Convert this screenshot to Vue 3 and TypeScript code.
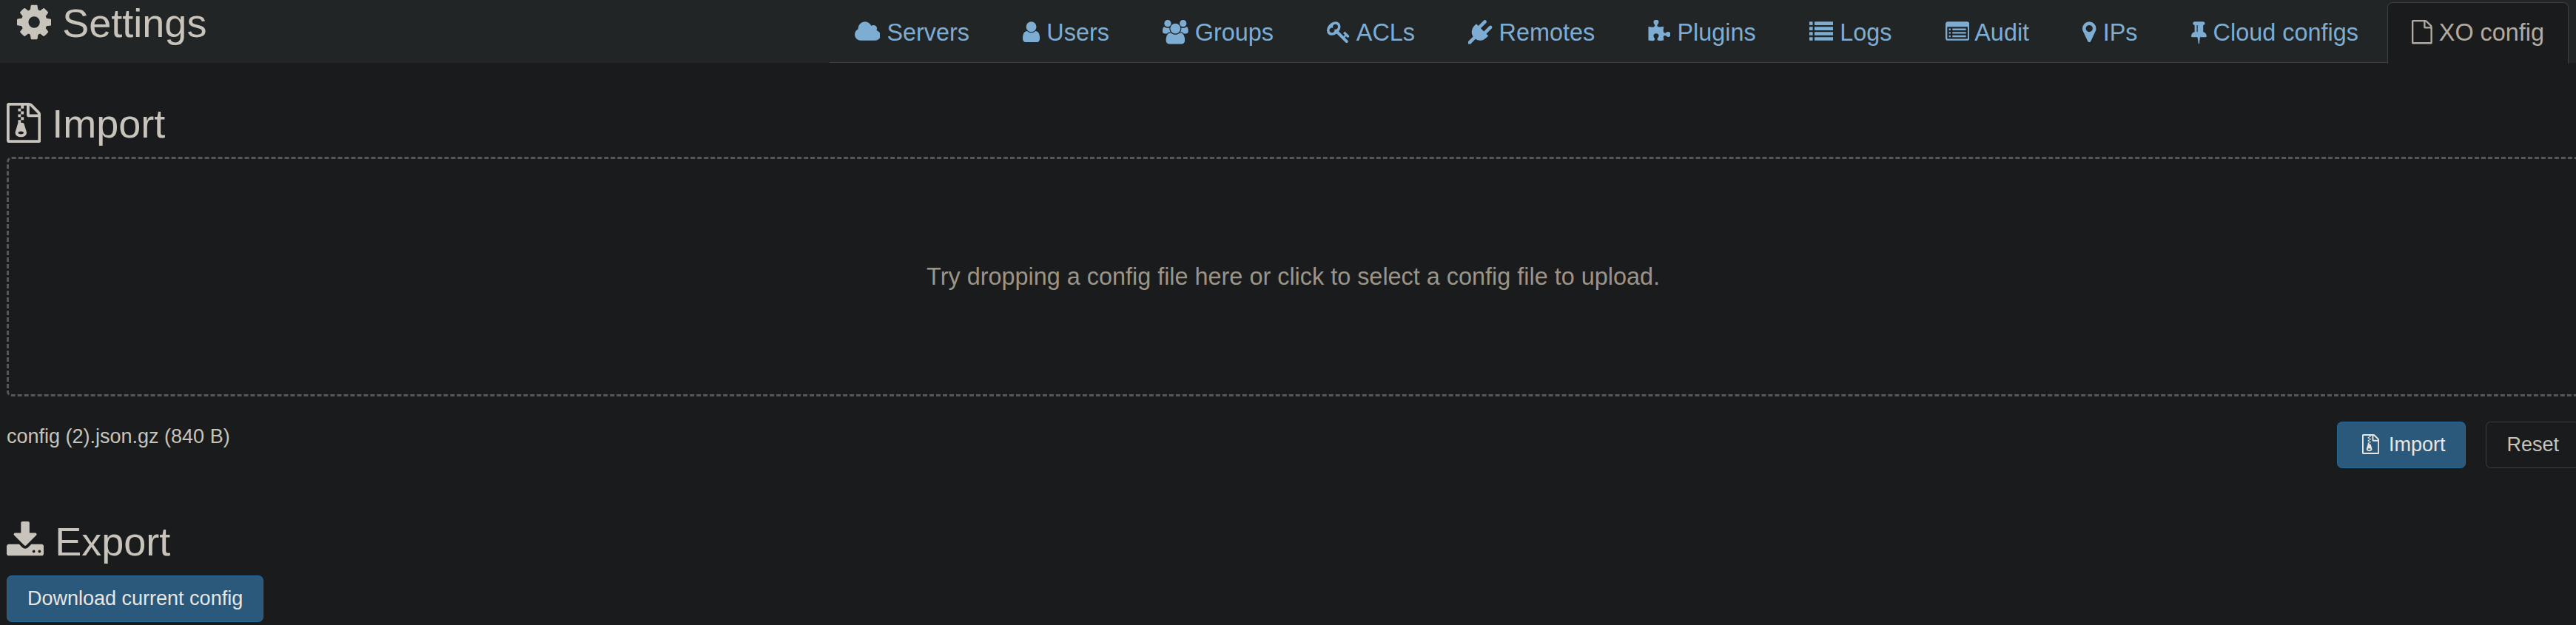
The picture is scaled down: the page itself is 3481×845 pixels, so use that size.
<script setup lang="ts">
import { h, type FunctionalComponent } from 'vue'

interface Glyph {
  x: number
  w: number
  d: string
}

// Glyphs share a 1792-unit em square; x and w describe the horizontal advance box.
const glyphs: Record<string, Glyph> = {
  cog: { x: 128, w: 1536, d: 'M1152 896q0-106-75-181t-181-75-181 75-75 181 75 181 181 75 181-75 75-181zm512-109v222q0 12-8 23t-20 13l-185 28q-19 54-39 91 35 50 107 138 10 12 10 25t-9 23q-27 37-99 108t-94 71q-12 0-26-9l-138-108q-44 23-91 38-16 136-29 186-7 28-36 28h-222q-14 0-24.5-8.5t-11.5-21.5l-28-184q-49-16-90-37l-141 107q-10 9-25 9-14 0-25-11-126-114-165-168-7-10-7-23 0-12 8-23 15-21 51-66.5t54-70.5q-27-50-41-99l-183-27q-13-2-21-12.5t-8-23.5v-222q0-12 8-23t19-13l186-28q14-46 39-92-40-57-107-138-10-12-10-24 0-10 9-23 26-36 98.5-107.5t94.5-71.5q13 0 26 10l138 107q44-23 91-38 16-136 29-186 7-28 36-28h222q14 0 24.5 8.5t11.5 21.5l28 184q49 16 90 37l142-107q9-9 24-9 13 0 25 10 129 119 165 170 7 8 7 22 0 12-8 23-15 21-51 66.5t-54 70.5q26 50 41 98l183 28q13 2 21 12.5t8 23.5z' },
  cloud: { x: -64, w: 1920, d: 'M1856 1152q0 159-112.5 271.5t-271.5 112.5h-1088q-185 0-316.5-131.5t-131.5-316.5q0-132 71-241.5t187-163.5q-2-28-2-43 0-212 150-362t362-150q158 0 286.5 88t187.5 230q70-62 166-62 106 0 181 75t75 181q0 75-41 138 129 30 213 134.5t84 239.5z' },
  user: { x: 256, w: 1280, d: 'M1536 1399q0 109-62.5 187t-150.5 78h-854q-88 0-150.5-78t-62.5-187q0-85 8.5-160.5t31.5-152 58.5-131 94-89 134.5-34.5q131 128 313 128t313-128q76 0 134.5 34.5t94 89 58.5 131 31.5 152 8.5 160.5zm-256-887q0 159-112.5 271.5t-271.5 112.5-271.5-112.5-112.5-271.5 112.5-271.5 271.5-112.5 271.5 112.5 112.5 271.5z' },
  users: { x: 0, w: 1920, d: 'M593 896q-162 5-265 128h-134q-82 0-138-40.5t-56-118.5q0-353 124-353 6 0 43.5 21t97.5 42.5 119 21.5q67 0 133-23-5 37-5 66 0 139 81 256zm1071 637q0 120-73 189.5t-194 69.5h-874q-121 0-194-69.5t-73-189.5q0-53 3.5-103.5t14-109 26.5-108.5 43-97.5 62-81 85.5-53.5 111.5-20q10 0 43 21.5t73 48 107 48 135 21.5 135-21.5 107-48 73-48 43-21.5q61 0 111.5 20t85.5 53.5 62 81 43 97.5 26.5 108.5 14 109 3.5 103.5zm-1024-1277q0 106-75 181t-181 75-181-75-75-181 75-181 181-75 181 75 75 181zm704 384q0 159-112.5 271.5t-271.5 112.5-271.5-112.5-112.5-271.5 112.5-271.5 271.5-112.5 271.5 112.5 112.5 271.5zm576 225q0 78-56 118.5t-138 40.5h-134q-103-123-265-128 81-117 81-256 0-29-5-66 66 23 133 23 59 0 119-21.5t97.5-42.5 43.5-21q124 0 124 353zm-128-609q0 106-75 181t-181 75-181-75-75-181 75-181 181-75 181 75 75 181z' },
  key: { x: 0, w: 1792, d: 'M832 512q0-80-56-136t-136-56-136 56-56 136q0 42 19 83-41-19-83-19-80 0-136 56t-56 136 56 136 136 56 136-56 56-136q0-42-19-83 41 19 83 19 80 0 136-56t56-136zm851 704q0 17-49 66t-66 49q-9 0-28.5-16t-36.5-33-38.5-40-24.5-26l-96 96 220 220q28 28 28 68 0 42-39 81t-81 39q-40 0-68-28l-671-671q-176 131-365 131-163 0-265.5-102.5t-102.5-265.5q0-160 95-313t248-248 313-95q163 0 265.5 102.5t102.5 265.5q0 189-131 365l355 355 96-96q-3-3-26-24.5t-40-38.5-33-36.5-16-28.5q0-17 49-66t66-49q13 0 23 10 6 6 46 44.5t82 79.5 86.5 86 73 78 28.5 41z' },
  plug: { x: 0, w: 1792, d: 'M1755 453q37 38 37 90.5t-37 90.5l-401 400 150 150-160 160q-163 163-389.5 186.5t-411.5-100.5l-362 362h-181v-181l362-362q-124-185-100.5-411.5t186.5-389.5l160-160 150 150 400-401q38-37 91-37t90 37 37 90.5-37 90.5l-400 401 234 234 401-400q38-37 91-37t90 37z' },
  puzzle: { x: 64, w: 1664, d: 'M1755 1083q0 81-44.5 135t-123.5 54q-41 0-77.5-17.5t-59-38-56.5-38-71-17.5q-110 0-110 124 0 39 16 115t15 115v5q-22 0-33 1-34 3-97.5 11.5t-115.5 13.5-98 5q-61 0-103-26.5t-42-83.5q0-37 17.5-71t38-56.5 38-59 17.5-77.5q0-79-54-123.5t-135-44.5q-84 0-143 45.5t-59 127.5q0 43 15 83t33.5 64.5 33.5 53 15 50.5q0 45-46 89-37 35-117 35-95 0-245-24-9-2-27.5-4t-27.5-4l-13-2q-1 0-3-1-2 0-2-1v-1024q2 1 17.5 3.5t34 5 21.5 3.5q150 24 245 24 80 0 117-35 46-44 46-89 0-22-15-50.5t-33.5-53-33.5-64.5-15-83q0-82 59-127.5t144-45.5q80 0 134 44.5t54 123.5q0 41-17.5 77.5t-38 59-38 56.5-17.5 71q0 57 42 83.5t103 26.5q64 0 180-15t163-17v2q-1 2-3.5 17.5t-5 34-3.5 21.5q-24 150-24 245 0 80 35 117 44 46 89 46 22 0 50.5-15t53-33.5 64.5-33.5 83-15q82 0 127.5 59t45.5 143z' },
  list: { x: 0, w: 1792, d: 'M32 128h192q32 0 32 32v192q0 32-32 32h-192q-32 0-32-32v-192q0-32 32-32zM32 512h192q32 0 32 32v192q0 32-32 32h-192q-32 0-32-32v-192q0-32 32-32zM32 896h192q32 0 32 32v192q0 32-32 32h-192q-32 0-32-32v-192q0-32 32-32zM32 1280h192q32 0 32 32v192q0 32-32 32h-192q-32 0-32-32v-192q0-32 32-32zM416 128h1344q32 0 32 32v192q0 32-32 32h-1344q-32 0-32-32v-192q0-32 32-32zM416 512h1344q32 0 32 32v192q0 32-32 32h-1344q-32 0-32-32v-192q0-32 32-32zM416 896h1344q32 0 32 32v192q0 32-32 32h-1344q-32 0-32-32v-192q0-32 32-32zM416 1280h1344q32 0 32 32v192q0 32-32 32h-1344q-32 0-32-32v-192q0-32 32-32z' },
  listAlt: { x: 0, w: 1792, d: 'M160 128h1472q66 0 113 47t47 113v1088q0 66-47 113t-113 47h-1472q-66 0-113-47t-47-113v-1088q0-66 47-113t113-47zM160 512q-32 0-32 32v832q0 32 32 32h1472q32 0 32-32v-832q0-32-32-32zM288 640h64q32 0 32 32v64q0 32-32 32h-64q-32 0-32-32v-64q0-32 32-32zM288 896h64q32 0 32 32v64q0 32-32 32h-64q-32 0-32-32v-64q0-32 32-32zM288 1152h64q32 0 32 32v64q0 32-32 32h-64q-32 0-32-32v-64q0-32 32-32zM544 640h960q32 0 32 32v64q0 32-32 32h-960q-32 0-32-32v-64q0-32 32-32zM544 896h960q32 0 32 32v64q0 32-32 32h-960q-32 0-32-32v-64q0-32 32-32zM544 1152h960q32 0 32 32v64q0 32-32 32h-960q-32 0-32-32v-64q0-32 32-32z' },
  marker: { x: 384, w: 1024, d: 'M1152 640q0-106-75-181t-181-75-181 75-75 181 75 181 181 75 181-75 75-181zm256 0q0 109-33 179l-364 774q-16 33-47.5 52t-67.5 19-67.5-19-46.5-52l-365-774q-33-70-33-179 0-212 150-362t362-150 362 150 150 362z' },
  tack: { x: 320, w: 1152, d: 'M800 864v-448q0-14-9-23t-23-9-23 9-9 23v448q0 14 9 23t23 9 23-9 9-23zm672 352q0 26-19 45t-45 19h-429l-51 483q-2 12-10.5 20.5t-20.5 8.5h-1q-27 0-32-27l-76-485h-404q-26 0-45-19t-19-45q0-123 78.5-221.5t177.5-98.5v-512q-52 0-90-38t-38-90 38-90 90-38h640q52 0 90 38t38 90-38 90-90 38v512q99 0 177.5 98.5t78.5 221.5z' },
  file: { x: 128, w: 1536, d: 'M1596 380q28 28 48 76t20 88v1152q0 40-28 68t-68 28h-1344q-40 0-68-28t-28-68v-1600q0-40 28-68t68-28h896q40 0 88 20t76 48zm-444-244v376h376q-10-29-22-41l-313-313q-12-12-41-22zm384 1528v-1024h-416q-40 0-68-28t-28-68v-416h-768v1536h1280z' },
  archive: { x: 128, w: 1536, d: 'M768 384v-128h-128v128h128zm128 128v-128h-128v128h128zm-128 128v-128h-128v128h128zm128 128v-128h-128v128h128zm700-388q28 28 48 76t20 88v1152q0 40-28 68t-68 28h-1344q-40 0-68-28t-28-68v-1600q0-40 28-68t68-28h896q40 0 88 20t76 48zm-444-244v376h376q-10-29-22-41l-313-313q-12-12-41-22zm384 1528v-1024h-416q-40 0-68-28t-28-68v-416h-128v128h-128v-128h-512v1536h1280zm-627-721l107 349q8 27 8 52 0 83-72.5 137.5t-183.5 54.5-183.5-54.5-72.5-137.5q0-25 8-52 21-63 120-396v-128h128v128h79q22 0 39 13t23 34zm-141 465q53 0 90.5-19t37.5-45-37.5-45-90.5-19-90.5 19-37.5 45 37.5 45 90.5 19z' },
  download: { x: 64, w: 1664, d: 'M1344 1344q0-26-19-45t-45-19-45 19-19 45 19 45 45 19 45-19 19-45zm256 0q0-26-19-45t-45-19-45 19-19 45 19 45 45 19 45-19 19-45zm128-224v320q0 40-28 68t-68 28h-1472q-40 0-68-28t-28-68v-320q0-40 28-68t68-28h465l135 136q58 56 136 56t136-56l136-136h464q40 0 68 28t28 68zm-325-569q17 41-14 70l-448 448q-18 19-45 19t-45-19l-448-448q-31-29-14-70 17-39 59-39h256v-448q0-26 19-45t45-19h256q26 0 45 19t19 45v448h256q42 0 59 39z' },
}

const Icon: FunctionalComponent<{ name: string }> = ({ name }) => {
  const g = glyphs[name]
  return h(
    'svg',
    {
      viewBox: `${g.x} 0 ${g.w} 1792`,
      style: { width: `${g.w / 1792}em` },
      'aria-hidden': 'true',
    },
    [h('path', { d: g.d, fill: 'currentColor', 'fill-rule': 'evenodd' })],
  )
}
Icon.props = ['name']

const tabs = [
  { icon: 'cloud', label: 'Servers' },
  { icon: 'user', label: 'Users' },
  { icon: 'users', label: 'Groups' },
  { icon: 'key', label: 'ACLs' },
  { icon: 'plug', label: 'Remotes' },
  { icon: 'puzzle', label: 'Plugins' },
  { icon: 'list', label: 'Logs' },
  { icon: 'listAlt', label: 'Audit' },
  { icon: 'marker', label: 'IPs' },
  { icon: 'tack', label: 'Cloud configs' },
  { icon: 'file', label: 'XO config' },
]
const activeTab = 'XO config'
</script>

<template>
  <div class="page">
    <header class="header">
      <h2 class="title"><Icon class="icon" name="cog" /> Settings</h2>
      <nav class="tabs">
        <a
          v-for="tab in tabs"
          :key="tab.label"
          class="tab"
          :class="{ active: tab.label === activeTab }"
        ><Icon class="icon" :name="tab.icon" /> {{ tab.label }}</a>
      </nav>
    </header>
    <main class="content">
      <h2 class="import-heading"><Icon class="icon" name="archive" /> Import</h2>
      <div class="dropzone">Try dropping a config file here or click to select a config file to upload.</div>
      <div class="file-row">
        <span class="file-name">config (2).json.gz (840 B)</span>
        <div class="actions">
          <button class="btn primary" type="button"><Icon class="icon wide" name="archive" /> Import</button>
          <button class="btn" type="button">Reset</button>
        </div>
      </div>
      <h2 class="export-heading"><Icon class="icon" name="download" /> Export</h2>
      <button class="btn primary" type="button">Download current config</button>
    </main>
  </div>
</template>

<style>
html {
  font-size: 27px;
}
body {
  margin: 0;
  overflow: hidden;
  background: #1a1b1c;
}
</style>

<style scoped>
.page {
  width: 3481px;
  height: 845px;
  overflow: hidden;
  background: #1a1b1c;
  color: #c8c3bb;
  font: 1rem/1.5 "Liberation Sans", Arial, sans-serif;
}
.icon {
  display: inline-block;
  height: 1em;
  vertical-align: -0.142857em;
}
.icon.wide {
  margin: 0 0.2143em;
}
h2 {
  margin: 0;
  font-size: 2rem;
  font-weight: 400;
  line-height: 1.1;
  height: 1.1em;
  white-space: pre;
}
.header {
  display: flex;
  justify-content: space-between;
  align-items: flex-end;
  box-sizing: border-box;
  height: 85px;
  padding-right: 9.6px;
  background: #222526;
}
.title {
  align-self: flex-start;
  padding: 1.6px 0 0 23px;
}
.tabs {
  display: flex;
  gap: 5.4px;
  box-sizing: border-box;
  height: 82px;
  border-bottom: 1px solid #3b4042;
  font-size: 1.2rem;
}
.tab {
  box-sizing: border-box;
  height: 83px;
  padding: 15.9px 1em 0;
  border: 1px solid transparent;
  border-radius: 7px 7px 0 0;
  color: #7eadd4;
  white-space: pre;
}
.tab.active {
  border-color: #3b4042;
  border-bottom: 0;
  background: #1a1b1c;
  color: #b2aba0;
}
.content {
  padding-left: 9px;
}
.import-heading {
  margin-top: 52.6px;
}
.dropzone {
  display: flex;
  align-items: center;
  justify-content: center;
  box-sizing: border-box;
  width: 3477px;
  height: 324px;
  margin-top: 15px;
  border: 3px dashed #52595c;
  border-radius: 6.75px;
  color: #9d9488;
  font-size: 1.2rem;
}
.file-row {
  display: flex;
  justify-content: space-between;
  margin-top: 34px;
}
.actions {
  display: flex;
  gap: 27px;
  margin-right: -5px;
}
.btn {
  display: block;
  box-sizing: border-box;
  height: 63px;
  padding: 0 1rem 1px;
  border: 1px solid #3b4042;
  border-radius: 6.75px;
  background: transparent;
  color: #c8c3bb;
  font: inherit;
  white-space: pre;
}
.btn.primary {
  border-color: #2b6795;
  background: #2b597b;
  color: #e8e6e3;
}
.export-heading {
  margin-top: 70.3px;
  margin-bottom: 15.3px;
}
</style>
